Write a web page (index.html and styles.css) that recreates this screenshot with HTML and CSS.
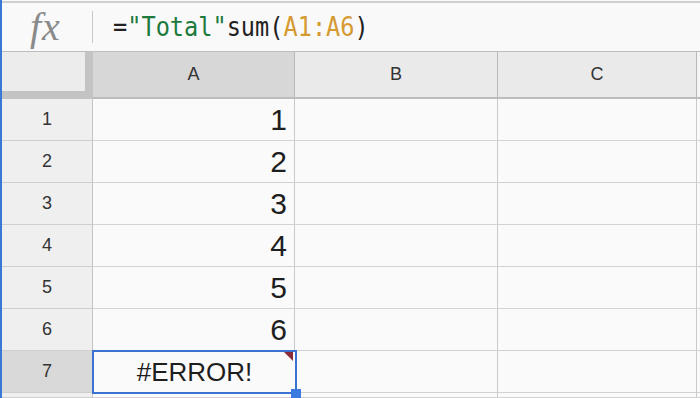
FILE: index.html
```html
<!DOCTYPE html>
<html>
<head>
<meta charset="utf-8">
<link rel="stylesheet" href="styles.css">
</head>
<body>
<div class="app">
  <div class="formula-bar">
    <span class="fx">fx</span>
    <span class="sep"></span>
    <span class="formula">=<span class="str">"Total"</span>sum(<span class="ref">A1:A6</span>)</span>
  </div>
  <div class="sheet">
    <div class="corner"></div>
    <div class="colhead active">A</div>
    <div class="colhead">B</div>
    <div class="colhead">C</div>
    <div class="colhead rest"></div>

    <div class="rowhead">1</div><div class="cell num">1</div><div class="cell"></div><div class="cell"></div><div class="cell rest"></div>
    <div class="rowhead">2</div><div class="cell num">2</div><div class="cell"></div><div class="cell"></div><div class="cell rest"></div>
    <div class="rowhead">3</div><div class="cell num">3</div><div class="cell"></div><div class="cell"></div><div class="cell rest"></div>
    <div class="rowhead">4</div><div class="cell num">4</div><div class="cell"></div><div class="cell"></div><div class="cell rest"></div>
    <div class="rowhead">5</div><div class="cell num">5</div><div class="cell"></div><div class="cell"></div><div class="cell rest"></div>
    <div class="rowhead">6</div><div class="cell num">6</div><div class="cell"></div><div class="cell"></div><div class="cell rest"></div>
    <div class="rowhead active">7</div>
    <div class="cell selected"><span class="err">#ERROR!</span><span class="flag"></span><span class="handle"></span></div>
    <div class="cell"></div><div class="cell"></div><div class="cell rest"></div>

    <div class="rowhead"></div><div class="cell"></div><div class="cell"></div><div class="cell"></div><div class="cell rest"></div>
  </div>
</div>
</body>
</html>
```

FILE: styles.css
```css
html, body {
  margin: 0;
  padding: 0;
  background: #fafafa;
  overflow: hidden;
}

.app {
  width: 698px;
  height: 398px;
  border-left: 2px solid #3a78d6;
  display: flex;
  flex-direction: column;
  font-family: "Liberation Sans", Arial, sans-serif;
  color: #222;
}

.formula-bar {
  height: 48px;
  margin-top: 1px;
  border-top: 2px solid #cfcfcf;
  background: #f9f9f9;
  display: flex;
  align-items: center;
  box-sizing: content-box;
}

.fx {
  font-family: "Liberation Serif", "Times New Roman", serif;
  font-style: italic;
  font-size: 40px;
  color: #8a8a8a;
  width: 44px;
  margin-left: 28px;
  line-height: 1;
  letter-spacing: 1px;
}

.sep {
  width: 1px;
  height: 32px;
  background: #c8c8c8;
  margin-left: 18px;
  margin-right: 20px;
}

.formula {
  display: inline-block;
  font-family: "DejaVu Sans Mono", "Liberation Mono", monospace;
  font-size: 23.6px;
  color: #222;
  transform: scaleY(1.15);
  transform-origin: center;
}

.formula .str { color: #1c7a3c; }
.formula .ref { color: #d59a32; }

.sheet {
  display: grid;
  grid-template-columns: 91px 202px 203px 199px 1fr;
  grid-template-rows: 48px repeat(7, 42px) 1fr;
  flex: 1;
  min-height: 0;
}

.corner {
  background: #ececec;
  border-top: 1px solid #bdbdbd;
  border-right: 8px solid #c3c3c3;
  border-bottom: 8px solid #c3c3c3;
}

.colhead {
  background: #eaeaea;
  border-top: 1px solid #bdbdbd;
  border-right: 1px solid #b8b8b8;
  border-bottom: 2px solid #bdbdbd;
  display: flex;
  align-items: center;
  justify-content: center;
  font-size: 18px;
  color: #333;
}

.colhead.active { background: #d7d7d7; }
.colhead.rest { border-right: none; background: #f4f4f4; }

.rowhead {
  background: #efefef;
  border-right: 1px solid #c4c4c4;
  border-bottom: 1px solid #cfcfcf;
  display: flex;
  align-items: center;
  justify-content: center;
  font-size: 18px;
  color: #333;
}

.rowhead.active { background: #d9d9d9; }

.cell {
  background: #fafafa;
  border-right: 1px solid #c9c9c9;
  border-bottom: 1px solid #d2d2d2;
  display: flex;
  align-items: center;
  position: relative;
}

.cell.rest { border-right: none; }

.cell.num {
  justify-content: flex-end;
  padding-right: 7px;
  font-size: 30px;
  color: #1e1e1e;
}

.cell.selected {
  justify-content: center;
  border: 2px solid #3b72d2;
  margin: -1px -2px -1px -1px;
  z-index: 1;
}

.err {
  font-size: 26px;
  color: #1e1e1e;
}

.flag {
  position: absolute;
  top: 0;
  right: 2px;
  width: 0;
  height: 0;
  border-top: 9px solid #8c2a3a;
  border-left: 9px solid transparent;
}

.handle {
  position: absolute;
  right: -6px;
  bottom: -8px;
  width: 10px;
  height: 11px;
  background: #3b7be0;
}
```
